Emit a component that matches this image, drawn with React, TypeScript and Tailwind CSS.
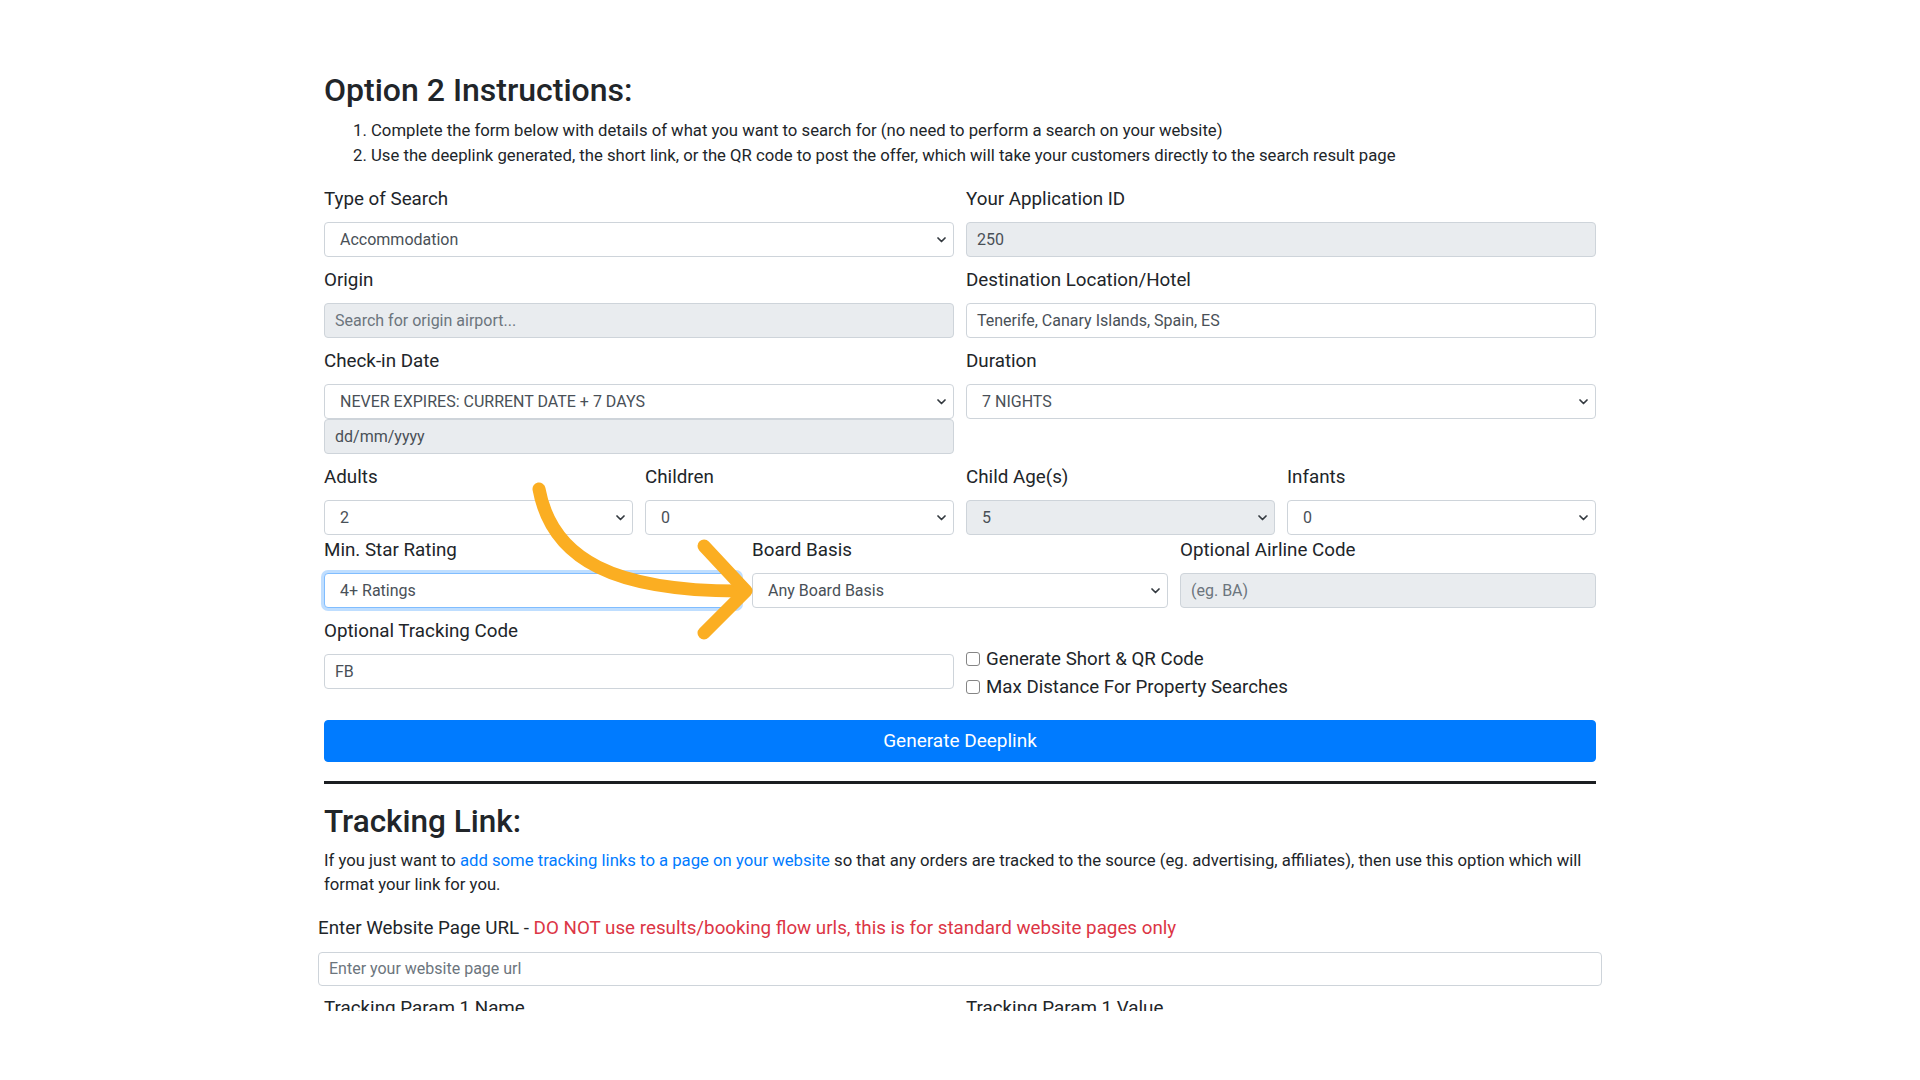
import React from "react";

const Chevron = () => (
  <svg width="9" height="6" viewBox="0 0 9 6" className="shrink-0">
    <path d="M1 1l3.5 3.5L8 1" stroke="#343a40" strokeWidth="1.7" fill="none" strokeLinecap="round" strokeLinejoin="round" />
  </svg>
);

const Label = ({ children }: { children: React.ReactNode }) => (
  <div className="text-[18.8px] leading-[27px] mb-[9px] text-[#212529] whitespace-nowrap">{children}</div>
);

const SelectBox = ({ value, disabled, focus }: { value: string; disabled?: boolean; focus?: boolean }) => (
  <div
    className={
      disabled
        ? "h-[35px] flex items-center justify-between pl-[15px] pr-[7px] border border-[#ced4da] rounded-[4px] bg-[#e9ecef] text-[16px] text-[#495057]"
        : focus
        ? "h-[35px] flex items-center justify-between pl-[15px] pr-[7px] border border-[#80bdff] rounded-[4px] bg-white text-[16px] text-[#495057] shadow-[0_0_0_3px_rgba(0,123,255,0.25)]"
        : "h-[35px] flex items-center justify-between pl-[15px] pr-[7px] border border-[#ced4da] rounded-[4px] bg-white text-[16px] text-[#495057]"
    }
  >
    <span className="whitespace-nowrap">{value}</span>
    <Chevron />
  </div>
);

const InputBox = ({ value, placeholder, disabled }: { value?: string; placeholder?: string; disabled?: boolean }) => (
  <div
    className={
      disabled
        ? "h-[35px] flex items-center pl-[10px] border border-[#ced4da] rounded-[4px] bg-[#e9ecef] text-[16px]"
        : "h-[35px] flex items-center pl-[10px] border border-[#ced4da] rounded-[4px] bg-white text-[16px]"
    }
  >
    {value ? (
      <span className="text-[#495057] whitespace-nowrap">{value}</span>
    ) : (
      <span className="text-[#6c757d] whitespace-nowrap">{placeholder}</span>
    )}
  </div>
);

const Check = ({ label }: { label: string }) => (
  <div className="flex items-center h-[28px] text-[18.7px] text-[#212529]">
    <span className="w-[14px] h-[14px] border border-[#858585] rounded-[3px] bg-white mr-[6px] shrink-0" />
    <span className="whitespace-nowrap">{label}</span>
  </div>
);

export default function App() {
  return (
    <div className="w-[1920px] h-[1080px] bg-white relative overflow-hidden" style={{ fontFamily: "Roboto, 'Noto Sans', sans-serif" }}>
      <div className="h-[1011px] overflow-hidden">
        <div className="w-[1272px] ml-[324px] pt-[70px]">
          <h3 className="text-[32px] leading-[41px] font-medium text-[#212529]">Option 2 Instructions:</h3>
          <ol className="list-decimal pl-[47px] mt-[8px] text-[16.7px] leading-[24.5px] text-[#212529]">
            <li>Complete the form below with details of what you want to search for (no need to perform a search on your website)</li>
            <li>Use the deeplink generated, the short link, or the QR code to post the offer, which will take your customers directly to the search result page</li>
          </ol>

          <div className="mt-[18px] grid grid-cols-2 gap-x-[12px]">
            <div className="mb-[10px]">
              <Label>Type of Search</Label>
              <SelectBox value="Accommodation" />
            </div>
            <div className="mb-[10px]">
              <Label>Your Application ID</Label>
              <InputBox value="250" disabled />
            </div>
            <div className="mb-[10px]">
              <Label>Origin</Label>
              <InputBox placeholder="Search for origin airport..." disabled />
            </div>
            <div className="mb-[10px]">
              <Label>Destination Location/Hotel</Label>
              <InputBox value="Tenerife, Canary Islands, Spain, ES" />
            </div>
            <div className="mb-[10px]">
              <Label>Check-in Date</Label>
              <SelectBox value="NEVER EXPIRES: CURRENT DATE + 7 DAYS" />
              <InputBox value="dd/mm/yyyy" disabled />
            </div>
            <div className="mb-[10px]">
              <Label>Duration</Label>
              <SelectBox value="7 NIGHTS" />
            </div>
          </div>

          <div className="grid grid-cols-4 gap-x-[12px] mb-[2px]">
            <div>
              <Label>Adults</Label>
              <SelectBox value="2" />
            </div>
            <div>
              <Label>Children</Label>
              <SelectBox value="0" />
            </div>
            <div>
              <Label>Child Age(s)</Label>
              <SelectBox value="5" disabled />
            </div>
            <div>
              <Label>Infants</Label>
              <SelectBox value="0" />
            </div>
          </div>

          <div className="grid grid-cols-3 gap-x-[12px] mb-[10px]">
            <div>
              <Label>Min. Star Rating</Label>
              <SelectBox value="4+ Ratings" focus />
            </div>
            <div>
              <Label>Board Basis</Label>
              <SelectBox value="Any Board Basis" />
            </div>
            <div>
              <Label>Optional Airline Code</Label>
              <InputBox placeholder="(eg. BA)" disabled />
            </div>
          </div>

          <div className="grid grid-cols-2 gap-x-[12px]">
            <div>
              <Label>Optional Tracking Code</Label>
              <InputBox value="FB" />
            </div>
            <div className="pt-[27px]">
              <Check label="Generate Short & QR Code" />
              <Check label="Max Distance For Property Searches" />
            </div>
          </div>

          <button className="mt-[19px] w-full h-[42px] rounded-[4px] bg-[#007bff] border border-[#007bff] text-white text-[19px] flex items-center justify-center">
            Generate Deeplink
          </button>

          <div className="mt-[19px] h-[3px] bg-[#1b1e21]" />

          <h3 className="mt-[17px] text-[31.5px] leading-[41px] font-medium text-[#212529]">Tracking Link:</h3>
          <p className="mt-[7px] text-[16.7px] leading-[24px] text-[#212529]">
            If you just want to <span className="text-[#007bff]">add some tracking links to a page on your website</span> so that any orders are tracked to the source (eg. advertising, affiliates), then use this option which will
            <br />
            format your link for you.
          </p>
        </div>

        <div className="w-[1284px] ml-[318px] mt-[18px]">
          <div className="text-[18.8px] leading-[27px] mb-[10px] text-[#212529] whitespace-nowrap">
            Enter Website Page URL - <span className="text-[#dc3545]">DO NOT use results/booking flow urls, this is for standard website pages only</span>
          </div>
          <div className="h-[34px] flex items-center pl-[10px] border border-[#ced4da] rounded-[4px] bg-white text-[16px]">
            <span className="text-[#6c757d]">Enter your website page url</span>
          </div>
        </div>
        <div className="w-[1272px] ml-[324px] mt-[9px] grid grid-cols-2 gap-x-[12px]">
          <div className="text-[18.8px] leading-[27px] text-[#212529]">Tracking Param 1 Name</div>
          <div className="text-[18.8px] leading-[27px] text-[#212529]">Tracking Param 1 Value</div>
        </div>
      </div>

      <svg className="absolute left-0 top-0 pointer-events-none" width="1920" height="1080" viewBox="0 0 1920 1080">
        <path d="M539 489 C552 560 615 592 744 591" stroke="#fbae22" strokeWidth="13" fill="none" strokeLinecap="round" />
        <path d="M704 546 L746 591 L704 633" stroke="#fbae22" strokeWidth="13" fill="none" strokeLinecap="round" strokeLinejoin="round" />
      </svg>
    </div>
  );
}
